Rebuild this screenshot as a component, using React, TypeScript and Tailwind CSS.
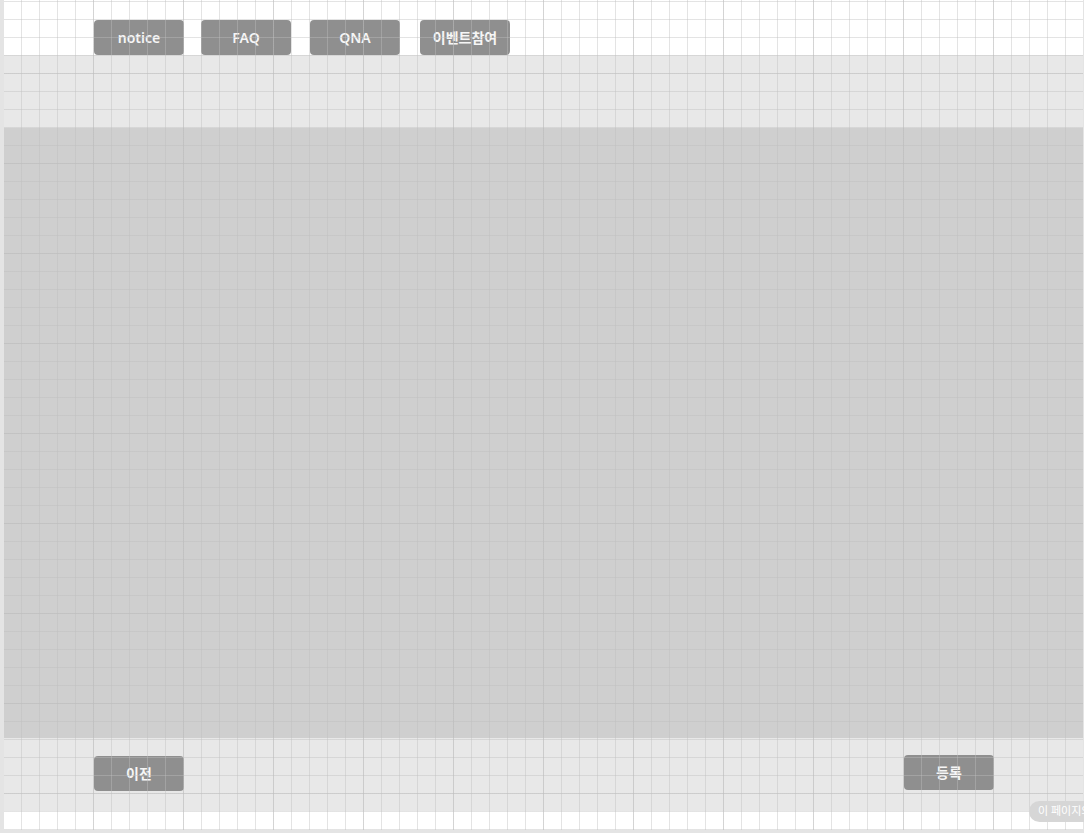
import React from "react";

const tabs = ["notice", "FAQ", "QNA", "이벤트참여"];
const tabGap = ["ml-0", "ml-[17px]", "ml-[19px]", "ml-[20px]"];

function GrayButton({ label, className = "" }: { label: string; className?: string }) {
  return (
    <button className={`h-[35px] w-[90px] rounded-[4px] bg-[#8f8f8f] text-[14px] font-semibold text-[#f6f6f6] ${className}`}>
      {label}
    </button>
  );
}

export default function App() {
  return (
    <div
      className="h-[833px] w-[1084px] overflow-hidden bg-[#e4e4e4] pb-[3px] pl-[4px] pr-[1px]"
      style={{ fontFamily: '"Noto Sans", "Noto Sans CJK KR", sans-serif' }}
    >
      <div className="relative flex h-full flex-col">
        {/* top nav */}
        <div className="flex h-[55px] items-start bg-white pl-[90px] pt-[20px]">
          {tabs.map((t, i) => (
            <GrayButton key={t} label={t} className={tabGap[i]} />
          ))}
        </div>

        <div className="h-[73px] bg-[#e8e8e8]" />

        {/* content area */}
        <div className="h-[610px] bg-[#cfcfcf]" />

        {/* footer actions */}
        <div className="flex h-[73px] items-start justify-between bg-[#e8e8e8] pl-[90px] pr-[89px] pt-[17px]">
          <GrayButton label="이전" className="mt-[1px]" />
          <GrayButton label="등록" />
        </div>

        <div className="flex-1 bg-white" />

        {/* layout grid overlay */}
        <div className="pointer-events-none absolute inset-0 [background-image:linear-gradient(to_right,rgba(190,190,190,0.42)_1px,transparent_1px),linear-gradient(to_bottom,rgba(190,190,190,0.42)_1px,transparent_1px),linear-gradient(to_right,rgba(180,180,180,0.35)_1px,transparent_1px),linear-gradient(to_bottom,rgba(180,180,180,0.3)_1px,transparent_1px)] [background-position:-1px_0,0_1px,-1px_0,0_73px] [background-size:18px_18px,18px_18px,90px_90px,90px_90px]" />

        {/* page badge */}
        <div className="absolute left-[1025px] top-[801px] flex h-[21px] w-[80px] items-center whitespace-nowrap rounded-full bg-[#d6d6d6] pl-[9px] text-[11px] text-white">
          이 페이지의
        </div>
      </div>
    </div>
  );
}
